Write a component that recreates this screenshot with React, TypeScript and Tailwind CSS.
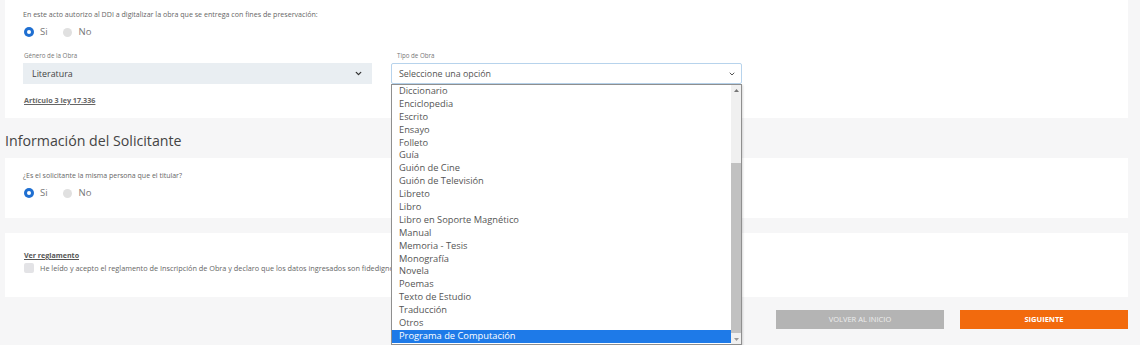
import { ChevronDown } from "lucide-react";

const tipos = [
  "Diccionario",
  "Enciclopedia",
  "Escrito",
  "Ensayo",
  "Folleto",
  "Guía",
  "Guión de Cine",
  "Guión de Televisión",
  "Libreto",
  "Libro",
  "Libro en Soporte Magnético",
  "Manual",
  "Memoria - Tesis",
  "Monografía",
  "Novela",
  "Poemas",
  "Texto de Estudio",
  "Traducción",
  "Otros",
  "Programa de Computación",
];

// Radio pair Si / No
const SiNo = () => (
  <div className="flex items-center gap-[15px] text-[9.5px] leading-[12px] text-[#777]">
    <span className="flex items-center gap-[6px]">
      <span className="flex h-[10px] w-[10px] items-center justify-center rounded-full bg-[#1f6fd1]">
        <span className="h-[4px] w-[4px] rounded-full bg-white" />
      </span>
      Si
    </span>
    <span className="flex items-center gap-[7px]">
      <span className="h-[9px] w-[9px] rounded-full bg-[#e0e0e0]" />
      No
    </span>
  </div>
);

const App = () => {
  return (
    <div className="relative h-[345px] w-[1140px] overflow-hidden bg-[#f6f6f7] font-['Open_Sans',sans-serif] text-[#555]">
      {/* Card 1 */}
      <div className="ml-[5px] h-[118px] w-[1123px] bg-white pl-[18px] pt-[9px]">
        <p className="text-[7.1px] leading-[10px] text-[#666]">
          En este acto autorizo al DDI a digitalizar la obra que se entrega con fines de preservación:
        </p>
        <div className="mt-[7px] ml-[1px]">
          <SiNo />
        </div>
        <div className="mt-[13px] flex gap-[19px]">
          <div className="w-[349px]">
            <p className="pl-[1px] text-[6.2px] leading-[10px] text-[#777]">Género de la Obra</p>
            <div className="mt-[2px] flex h-[21px] items-center justify-between bg-[#e9eef2] pl-[9px] pr-[9px] text-[8.9px] text-[#444]">
              Literatura
              <ChevronDown size={9} strokeWidth={3.5} className="text-[#333]" />
            </div>
          </div>
          <div className="w-[351px]">
            <p className="pl-[6px] text-[6.2px] leading-[10px] text-[#777]">Tipo de Obra</p>
            <div className="mt-[2px] flex h-[21px] items-center justify-between rounded-[2px] border border-[#b7d3ec] bg-white pl-[7px] pr-[5px] text-[8.9px] text-[#555]">
              Seleccione una opción
              <ChevronDown size={8} strokeWidth={3} className="text-[#555]" />
            </div>
          </div>
        </div>
        <p className="mt-[11px] pl-[1px] text-[7.2px] font-bold leading-[10px] text-[#666] underline">
          Artículo 3 ley 17.336
        </p>
      </div>

      {/* Solicitante */}
      <h2 className="mt-[12px] ml-[5px] text-[14.2px] leading-[22px] text-[#444]">Información del Solicitante</h2>
      <div className="mt-[6px] ml-[5px] h-[60px] w-[1123px] bg-white pl-[18px] pt-[13px]">
        <p className="text-[7px] leading-[10px] text-[#666]">¿Es el solicitante la misma persona que el titular?</p>
        <div className="mt-[6px] ml-[1px]">
          <SiNo />
        </div>
      </div>

      {/* Reglamento */}
      <div className="mt-[15px] ml-[5px] h-[64px] w-[1123px] bg-white pl-[19px] pt-[17px]">
        <p className="text-[7.1px] font-bold leading-[10px] text-[#555] underline">Ver reglamento</p>
        <div className="mt-[3px] flex items-center gap-[6px] text-[7.3px] text-[#666]">
          <span className="h-[10px] w-[10px] rounded-[2px] bg-[#e3e3e6]" />
          He leído y acepto el reglamento de Inscripción de Obra y declaro que los datos ingresados son fidedignos
        </div>
      </div>

      {/* Buttons */}
      <div className="mt-[13px] flex justify-end gap-[16px] pr-[12px]">
        <button className="h-[19px] w-[168px] bg-[#b4b4b4] text-[7.5px] text-[#eee]">VOLVER AL INICIO</button>
        <button className="h-[19px] w-[168px] bg-[#f26a0d] text-[7.5px] font-bold text-white">SIGUIENTE</button>
      </div>

      {/* Open dropdown list */}
      <div className="absolute left-[391px] top-[84px] flex h-[261px] w-[351px] border border-[#8f8f8f] bg-white shadow-[1px_1px_2px_rgba(0,0,0,0.15)]">
        <ul className="flex-1">
          {tipos.map((t, i) => (
            <li
              key={t}
              className={
                i === tipos.length - 1
                  ? "h-[12.9px] bg-[#1e7ae8] pl-[7px] text-[9.3px] leading-[12.9px] text-white"
                  : "h-[12.9px] pl-[7px] text-[9.3px] leading-[12.9px] text-[#555]"
              }
            >
              {t}
            </li>
          ))}
        </ul>
        <div className="flex w-[10px] flex-col bg-[#f0f0f0]">
          <div className="flex h-[10px] items-center justify-center">
            <svg width="5" height="3" viewBox="0 0 5 3">
              <path d="M0 3 L2.5 0 L5 3 Z" fill="#777" />
            </svg>
          </div>
          <div className="flex-1 pt-[68px] pb-[1px]">
            <div className="h-full w-[10px] bg-[#c1c1c1]" />
          </div>
          <div className="flex h-[10px] items-center justify-center">
            <svg width="5" height="3" viewBox="0 0 5 3">
              <path d="M0 0 L5 0 L2.5 3 Z" fill="#999" />
            </svg>
          </div>
        </div>
      </div>
    </div>
  );
};

export default App;
